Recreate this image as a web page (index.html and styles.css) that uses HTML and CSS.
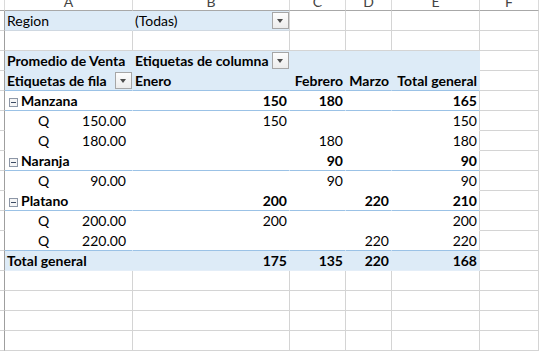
FILE: index.html
```html
<!DOCTYPE html>
<html lang="es">
<head>
    <meta charset="UTF-8">
    <meta name="viewport" content="width=device-width, initial-scale=1.0">
    <title>Promedio de Venta</title>
    <link rel="stylesheet" href="styles.css">
</head>
<body>
    <div class="sheet">
        <!-- column letters -->
        <div class="row head">
            <div class="cell rh"></div>
            <div class="cell"><span>A</span></div>
            <div class="cell"><span>B</span></div>
            <div class="cell"><span>C</span></div>
            <div class="cell"><span>D</span></div>
            <div class="cell"><span>E</span></div>
            <div class="cell"><span>F</span></div>
        </div>

        <!-- report filter -->
        <div class="row field">
            <div class="cell rh"></div>
            <div class="cell fill">Region</div>
            <div class="cell fill end">(Todas)<span class="drop"></span></div>
            <div class="cell"></div>
            <div class="cell"></div>
            <div class="cell"></div>
            <div class="cell"></div>
        </div>

        <div class="row">
            <div class="cell rh"></div>
            <div class="cell"></div>
            <div class="cell"></div>
            <div class="cell"></div>
            <div class="cell"></div>
            <div class="cell"></div>
            <div class="cell"></div>
        </div>

        <!-- pivot header -->
        <div class="row">
            <div class="cell rh"></div>
            <div class="cell fill bold">Promedio de Venta</div>
            <div class="cell fill bold">Etiquetas de columna<span class="drop"></span></div>
            <div class="cell fill"></div>
            <div class="cell fill"></div>
            <div class="cell fill"></div>
            <div class="cell"></div>
        </div>
        <div class="row labels">
            <div class="cell rh"></div>
            <div class="cell fill bold">Etiquetas de fila<span class="drop"></span></div>
            <div class="cell fill bold">Enero</div>
            <div class="cell fill bold num">Febrero</div>
            <div class="cell fill bold num">Marzo</div>
            <div class="cell fill bold num">Total general</div>
            <div class="cell"></div>
        </div>

        <!-- Manzana -->
        <div class="row group">
            <div class="cell rh"></div>
            <div class="cell in bold"><span class="toggle"></span>Manzana</div>
            <div class="cell in bold num">150</div>
            <div class="cell in bold num">180</div>
            <div class="cell in bold num"></div>
            <div class="cell in last bold num">165</div>
            <div class="cell"></div>
        </div>
        <div class="row">
            <div class="cell rh"></div>
            <div class="cell in acct"><span>Q</span><span>150.00</span></div>
            <div class="cell in num">150</div>
            <div class="cell in num"></div>
            <div class="cell in num"></div>
            <div class="cell in last num">150</div>
            <div class="cell"></div>
        </div>
        <div class="row">
            <div class="cell rh"></div>
            <div class="cell in acct"><span>Q</span><span>180.00</span></div>
            <div class="cell in num"></div>
            <div class="cell in num">180</div>
            <div class="cell in num"></div>
            <div class="cell in last num">180</div>
            <div class="cell"></div>
        </div>

        <!-- Naranja -->
        <div class="row group">
            <div class="cell rh"></div>
            <div class="cell in bold"><span class="toggle"></span>Naranja</div>
            <div class="cell in bold num"></div>
            <div class="cell in bold num">90</div>
            <div class="cell in bold num"></div>
            <div class="cell in last bold num">90</div>
            <div class="cell"></div>
        </div>
        <div class="row">
            <div class="cell rh"></div>
            <div class="cell in acct"><span>Q</span><span>90.00</span></div>
            <div class="cell in num"></div>
            <div class="cell in num">90</div>
            <div class="cell in num"></div>
            <div class="cell in last num">90</div>
            <div class="cell"></div>
        </div>

        <!-- Platano -->
        <div class="row group">
            <div class="cell rh"></div>
            <div class="cell in bold"><span class="toggle"></span>Platano</div>
            <div class="cell in bold num">200</div>
            <div class="cell in bold num"></div>
            <div class="cell in bold num">220</div>
            <div class="cell in last bold num">210</div>
            <div class="cell"></div>
        </div>
        <div class="row">
            <div class="cell rh"></div>
            <div class="cell in acct"><span>Q</span><span>200.00</span></div>
            <div class="cell in num">200</div>
            <div class="cell in num"></div>
            <div class="cell in num"></div>
            <div class="cell in last num">200</div>
            <div class="cell"></div>
        </div>
        <div class="row group">
            <div class="cell rh"></div>
            <div class="cell in acct"><span>Q</span><span>220.00</span></div>
            <div class="cell in num"></div>
            <div class="cell in num"></div>
            <div class="cell in num">220</div>
            <div class="cell in last num">220</div>
            <div class="cell"></div>
        </div>

        <!-- grand total -->
        <div class="row total">
            <div class="cell rh"></div>
            <div class="cell fill bold">Total general</div>
            <div class="cell fill bold num">175</div>
            <div class="cell fill bold num">135</div>
            <div class="cell fill bold num">220</div>
            <div class="cell fill bold num">168</div>
            <div class="cell"></div>
        </div>

        <div class="row">
            <div class="cell rh"></div>
            <div class="cell"></div>
            <div class="cell"></div>
            <div class="cell"></div>
            <div class="cell"></div>
            <div class="cell"></div>
            <div class="cell"></div>
        </div>
        <div class="row">
            <div class="cell rh"></div>
            <div class="cell"></div>
            <div class="cell"></div>
            <div class="cell"></div>
            <div class="cell"></div>
            <div class="cell"></div>
            <div class="cell"></div>
        </div>
        <div class="row">
            <div class="cell rh"></div>
            <div class="cell"></div>
            <div class="cell"></div>
            <div class="cell"></div>
            <div class="cell"></div>
            <div class="cell"></div>
            <div class="cell"></div>
        </div>
        <div class="row">
            <div class="cell rh"></div>
            <div class="cell"></div>
            <div class="cell"></div>
            <div class="cell"></div>
            <div class="cell"></div>
            <div class="cell"></div>
            <div class="cell"></div>
        </div>
    </div>
</body>
</html>
```

FILE: styles.css
```css
body {
    margin: 0;
    background: #fff;
    color: #000;
    font-family: Lato, "Liberation Sans", sans-serif;
    font-size: 14px;
    overflow: hidden;
}
.sheet {
    width: 100%;
}
.row {
    display: grid;
    grid-template-columns: 5px 128px 157px 56px 46px 88px 1fr;
    height: 20px;
}
.cell {
    position: relative;
    box-sizing: border-box;
    padding: 0 2px;
    line-height: 19px;
    white-space: nowrap;
    border-right: 1px solid #d4d4d4;
    border-bottom: 1px solid #d4d4d4;
}
.rh {
    padding: 0;
    border-right-color: #9f9f9f;
}

/* column letters, cut off by the top of the window */
.head {
    height: 11px;
}
.head .cell {
    overflow: hidden;
    text-align: center;
    color: #444;
    border-right-color: #dadada;
    border-bottom-color: #a8a8a8;
}
.head .cell span {
    display: block;
    margin-top: -8px;
}

.bold {
    font-weight: 700;
}
.num {
    text-align: right;
}

/* pivot colours */
.fill {
    background: #ddebf7;
    border-right-color: #ddebf7;
    border-bottom-color: #ddebf7;
}
.fill.end {
    border-right-color: #d4d4d4;
}
.field .fill {
    border-bottom-color: #cfd8e1;
}
.labels .fill {
    border-bottom-color: #9bc2e6;
}
.in {
    border-right-color: #fff;
    border-bottom-color: #fff;
}
.in.last {
    border-right-color: #d4d4d4;
}
.group .in {
    border-bottom-color: #9bc2e6;
}
.total .fill {
    border-bottom-color: #e4eef8;
}

/* accounting format: currency sign left, amount right */
.acct {
    display: flex;
    justify-content: space-between;
    padding: 0 6px 0 33px;
}

/* filter button */
.drop {
    position: absolute;
    right: 0;
    top: 1px;
    width: 17px;
    height: 17px;
    box-sizing: border-box;
    border: 1px solid #a6a6a6;
    background: linear-gradient(#fdfdfd, #ececec);
}
.drop::after {
    content: "";
    position: absolute;
    left: 4px;
    top: 6px;
    border-left: 3.5px solid transparent;
    border-right: 3.5px solid transparent;
    border-top: 4px solid #4d4d4d;
}

/* collapse box */
.toggle {
    display: inline-block;
    position: relative;
    width: 9px;
    height: 9px;
    box-sizing: border-box;
    margin: 0 3px 0 2px;
    border: 1px solid #8c96a6;
    background: #f5f5f5;
    vertical-align: -1px;
}
.toggle::after {
    content: "";
    position: absolute;
    left: 1px;
    top: 3px;
    width: 5px;
    height: 1px;
    background: #3c4b63;
}
```
